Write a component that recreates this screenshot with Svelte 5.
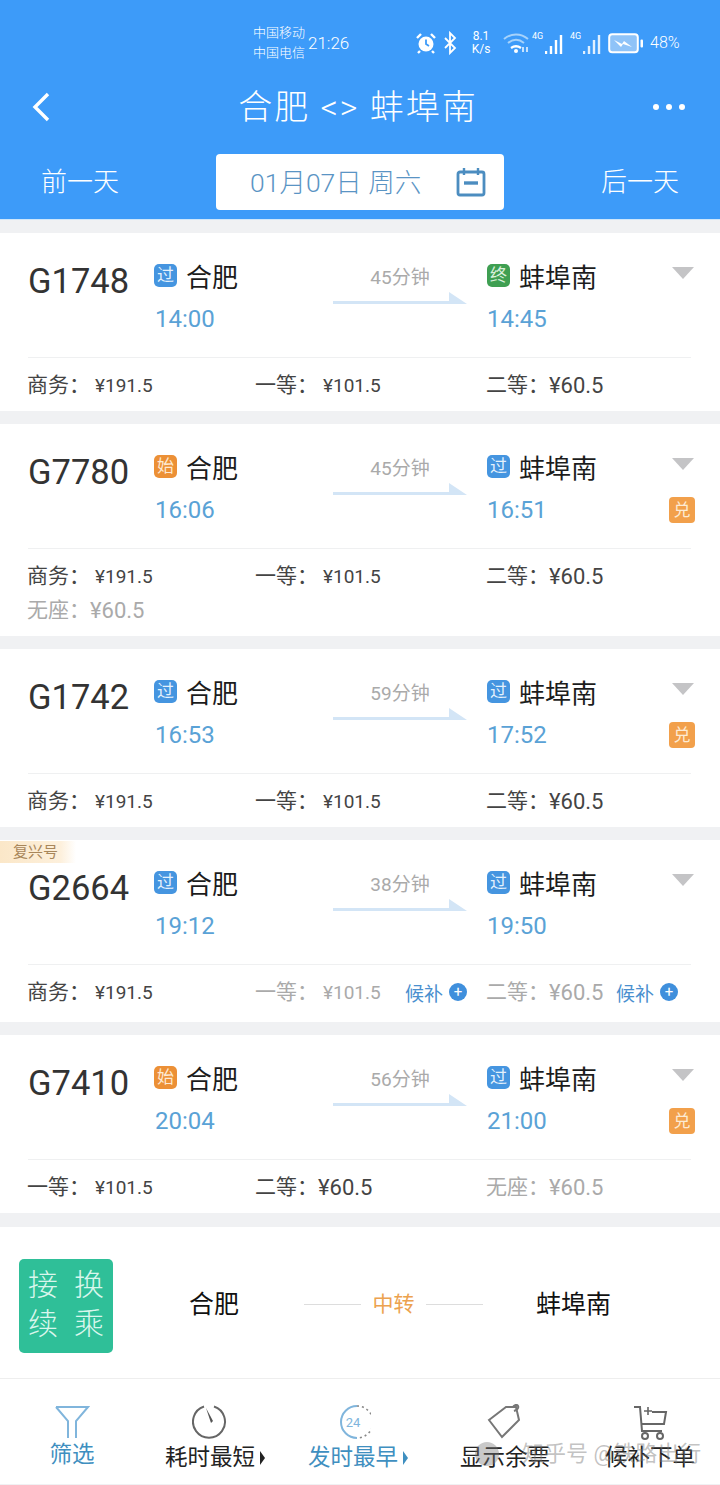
<script>
  const trains = [
    {
      no: "G1748", fromTag: "过", toTag: "终", dep: "14:00", arr: "14:45", dur: "45分钟",
      fares: [
        { name: "商务", price: "¥191.5" },
        { name: "一等", price: "¥101.5" },
        { name: "二等", price: "¥60.5", big: true },
      ],
    },
    {
      no: "G7780", fromTag: "始", toTag: "过", dep: "16:06", arr: "16:51", dur: "45分钟", swap: true,
      fares: [
        { name: "商务", price: "¥191.5" },
        { name: "一等", price: "¥101.5" },
        { name: "二等", price: "¥60.5", big: true },
        { name: "无座", price: "¥60.5", big: true, off: true },
      ],
    },
    {
      no: "G1742", fromTag: "过", toTag: "过", dep: "16:53", arr: "17:52", dur: "59分钟", swap: true,
      fares: [
        { name: "商务", price: "¥191.5" },
        { name: "一等", price: "¥101.5" },
        { name: "二等", price: "¥60.5", big: true },
      ],
    },
    {
      no: "G2664", fromTag: "过", toTag: "过", dep: "19:12", arr: "19:50", dur: "38分钟", fuxing: true,
      fares: [
        { name: "商务", price: "¥191.5" },
        { name: "一等", price: "¥101.5", off: true, wait: true },
        { name: "二等", price: "¥60.5", big: true, off: true, wait: true },
      ],
    },
    {
      no: "G7410", fromTag: "始", toTag: "过", dep: "20:04", arr: "21:00", dur: "56分钟", swap: true,
      fares: [
        { name: "一等", price: "¥101.5" },
        { name: "二等", price: "¥60.5", big: true },
        { name: "无座", price: "¥60.5", big: true, off: true },
      ],
    },
  ]

  const tagClass = { 过: "pass", 始: "start", 终: "end" }
</script>

<div class="page">
  <header>
    <div class="status">
      <div class="carriers">
        <span>中国移动</span>
        <span>中国电信</span>
      </div>
      <span class="clock">21:26</span>
      <svg class="alarm" width="22" height="22" viewBox="0 0 22 22">
        <circle cx="11" cy="12" r="7.5" fill="#fff" />
        <path d="M11 7.5V12l3 2" fill="none" stroke="#3d9bf9" stroke-width="1.8" />
        <path d="M2 6l4-4M20 6l-4-4M5 19l-2 2M17 19l2 2" stroke="#fff" stroke-width="2.4" />
      </svg>
      <svg class="bt" width="14" height="24" viewBox="0 0 14 24">
        <path d="M2 7l10 10-5 5V2l5 5L2 17" fill="none" stroke="#fff" stroke-width="1.8" />
      </svg>
      <div class="speed">
        <span>8.1</span>
        <span>K/s</span>
      </div>
      <svg class="wifi" width="26" height="22" viewBox="0 0 26 22">
        <path d="M1 7c7-6 17-6 24 0" fill="none" stroke="#a6d2fb" stroke-width="2" />
        <path d="M5 11c5-4 11-4 16 0" fill="none" stroke="#a6d2fb" stroke-width="2" />
        <path d="M8 16c3-2 7-2 10 0" fill="none" stroke="#fff" stroke-width="2.4" />
        <circle cx="13" cy="19" r="2" fill="#fff" />
        <path d="M20 15v5M24 15v5" stroke="#fff" stroke-width="1.4" />
      </svg>
      {#each [0, 1] as sim}
        <div class="signal">
          <span class="g">4G</span>
          <svg width="18" height="20" viewBox="0 0 18 20">
            <path d="M1 20v-3M6 20v-8M11 20V6M16 20V1" stroke="#fff" stroke-width="2.4" stroke-opacity={sim ? 0.85 : 1} />
          </svg>
        </div>
      {/each}
      <svg class="battery" width="36" height="22" viewBox="0 0 36 22">
        <rect x="1.2" y="2.2" width="28.6" height="18" rx="3" fill="#8fc3f8" stroke="#fff" stroke-width="2" />
        <path d="M6 8l8 4 2-3 8 6-9-3-2 3z" fill="#fff" />
        <rect x="32.5" y="7.5" width="2.5" height="8" rx="1" fill="#fff" />
      </svg>
      <span class="percent">48%</span>
    </div>

    <div class="titlebar">
      <svg class="back" width="20" height="30" viewBox="0 0 20 30">
        <path d="M17 2L4 15l13 13" fill="none" stroke="#fff" stroke-width="3.4" />
      </svg>
      <h1>合肥 &lt;&gt; 蚌埠南</h1>
      <div class="dots"><i></i><i></i><i></i></div>
    </div>

    <div class="dates">
      <span class="day">前一天</span>
      <div class="picker">
        <span>01月07日 周六</span>
        <svg width="30" height="30" viewBox="0 0 30 30">
          <rect x="2" y="5" width="26" height="23" rx="2" fill="none" stroke="#4c8dc0" stroke-width="2.8" />
          <path d="M8 1v7M22 1v7" stroke="#4c8dc0" stroke-width="2.4" />
          <path d="M8 16h14" stroke="#4c8dc0" stroke-width="3.4" />
        </svg>
      </div>
      <span class="day">后一天</span>
    </div>
  </header>

  <main>
    {#each trains as t}
      <section class="card" class:fuxing={t.fuxing}>
        {#if t.fuxing}
          <span class="ribbon">复兴号</span>
        {/if}
        <div class="route">
          <div class="no">{t.no}</div>
          <div class="stop">
            <span class="tag {tagClass[t.fromTag]}">{t.fromTag}</span>
            <span class="name">合肥</span>
          </div>
          <div class="dur">
            <span>{t.dur}</span>
            <svg width="134" height="14" viewBox="0 0 134 14">
              <path d="M0 10h116V1l18 12H0z" fill="#d3e5f6" />
            </svg>
          </div>
          <div class="stop arr">
            <span class="tag {tagClass[t.toTag]}">{t.toTag}</span>
            <span class="name">蚌埠南</span>
          </div>
          <div class="caret"></div>
          <div class="time">{t.dep}</div>
          <div class="time arr">{t.arr}</div>
          {#if t.swap}
            <div class="swap">兑</div>
          {/if}
        </div>
        <div class="fares">
          {#each t.fares as f}
            <div class="fare" class:off={f.off}>
              <span class="label">{f.name}：</span>
              <span class="price" class:big={f.big}>{f.price}</span>
              {#if f.wait}
                <span class="wait">候补<i>+</i></span>
              {/if}
            </div>
          {/each}
        </div>
      </section>
    {/each}

    <section class="transfer">
      <div class="badge">
        <span>接</span><span>换</span>
        <span>续</span><span>乘</span>
      </div>
      <span class="city from">合肥</span>
      <div class="via">
        <i></i>
        <span>中转</span>
        <i></i>
      </div>
      <span class="city to">蚌埠南</span>
    </section>
  </main>

  <footer>
    <div class="tab active first">
      <svg width="36" height="36" viewBox="0 0 36 36">
        <path d="M2 3h32L22 17v17M2 3l12 14v17" fill="none" stroke="#80b5dc" stroke-width="2" />
      </svg>
      <span>筛选</span>
    </div>
    <div class="tab">
      <svg width="36" height="36" viewBox="0 0 36 36">
        <path d="M12 2.5a16 16 0 1 0 10 0" fill="none" stroke="#666" stroke-width="2" />
        <path d="M14 4l5 15 2-2z" fill="#555" />
      </svg>
      <span class="sorted">耗时最短<b class="sort"></b></span>
    </div>
    <div class="tab active">
      <svg width="36" height="36" viewBox="0 0 36 36">
        <path d="M22 2a16 16 0 1 0 0 32" fill="none" stroke="#80b5dc" stroke-width="2" />
        <path d="M22 2a16 16 0 0 1 0 32" fill="none" stroke="#888" stroke-width="1.6" stroke-dasharray="2 3" />
        <text x="18" y="23" text-anchor="middle" class="hours">24</text>
      </svg>
      <span class="sorted">发时最早<b class="sort"></b></span>
    </div>
    <div class="tab">
      <svg width="36" height="36" viewBox="0 0 36 36">
        <path d="M2 17L19 4h10l3 13-17 17z" transform="translate(0 -1)" fill="none" stroke="#777" stroke-width="2" />
        <path d="M27 7c3-1 5-3 4-5s-4-1-5 1" fill="none" stroke="#777" stroke-width="2" />
      </svg>
      <span>显示余票</span>
    </div>
    <div class="tab">
      <svg width="36" height="36" viewBox="0 0 36 36">
        <path d="M2 3h6l2 24h20M20 8h14l-2 12H10" fill="none" stroke="#666" stroke-width="2" />
        <path d="M16 3v8M12 7h8" stroke="#666" stroke-width="1.6" />
        <circle cx="13" cy="32" r="3" fill="none" stroke="#666" stroke-width="2" />
        <circle cx="28" cy="32" r="3" fill="none" stroke="#666" stroke-width="2" />
      </svg>
      <span>候补下单</span>
    </div>
    <div class="mark">
      <i></i>
      <span>知乎号 @铁路出行</span>
    </div>
  </footer>
</div>

<style>
  :global(body) {
    margin: 0;
    background: #f0f1f3;
  }

  .page {
    width: 720px;
    height: 1485px;
    overflow: hidden;
    font-family: Roboto, "Noto Sans CJK SC", sans-serif;
    color: #222;
  }

  header {
    height: 219px;
    background: #3d9bf9;
    color: #fff;
    border-bottom: 1px solid #cfe7fb;
  }

  .status {
    box-sizing: border-box;
    padding: 21px 0 0 253px;
    display: flex;
    align-items: center;
    height: 64px;
  }

  .carriers {
    display: flex;
    flex-direction: column;
    font-size: 13px;
    line-height: 20px;
    width: 55px;
    font-weight: 300;
  }

  .clock {
    font-size: 17px;
    width: 107px;
    font-weight: 300;
  }

  .bt {
    margin-left: 6px;
  }

  .speed {
    display: flex;
    flex-direction: column;
    font-size: 12px;
    line-height: 13px;
    margin-left: 12px;
    width: 24px;
    text-align: center;
  }

  .wifi {
    margin-left: 10px;
  }

  .signal {
    display: flex;
    align-items: flex-end;
    margin-left: 3px;
    height: 22px;
    width: 35px;
  }

  .g {
    font-size: 9px;
    line-height: 9px;
    align-self: flex-start;
    width: 13px;
  }

  .signal + .signal {
    margin-left: 3px;
  }

  .battery {
    margin-left: 3px;
  }

  .percent {
    font-size: 16px;
    margin-left: 6px;
    font-weight: 300;
  }

  .titlebar {
    height: 86px;
    display: grid;
    grid-template-columns: 1fr auto 1fr;
    align-items: center;
    padding: 0 35px 0 31px;
  }

  .back {
    display: block;
  }

  h1 {
    margin: 0;
    font-size: 34px;
    font-weight: 300;
    line-height: 40px;
    letter-spacing: 2px;
  }

  .dots {
    display: flex;
    gap: 7px;
    justify-content: flex-end;
  }

  .dots i {
    width: 6px;
    height: 6px;
    border-radius: 50%;
    background: #fff;
  }

  .dates {
    display: flex;
    align-items: center;
    justify-content: space-between;
    padding: 4px 41px 0;
  }

  .day {
    font-size: 26px;
    font-weight: 300;
    line-height: 56px;
  }

  .picker {
    width: 288px;
    height: 56px;
    box-sizing: border-box;
    padding: 0 18px 0 34px;
    background: #fff;
    border-radius: 4px;
    display: flex;
    align-items: center;
    justify-content: space-between;
    color: #5a94c4;
    font-size: 26.5px;
    font-weight: 300;
  }

  .picker span {
    margin-bottom: 4px;
  }

  main {
    padding-top: 13px;
    display: flex;
    flex-direction: column;
    gap: 13px;
  }

  .card {
    position: relative;
    background: #fff;
    padding: 24px 28px 0;
  }

  .card.fuxing {
    padding-bottom: 4px;
  }

  .ribbon {
    position: absolute;
    left: 0;
    top: 1px;
    width: 76px;
    height: 22px;
    box-sizing: border-box;
    padding-left: 13px;
    background: linear-gradient(90deg, #fbe7c8, #fdf0dc 80%, #fff);
    color: #a8865a;
    font-size: 15px;
    line-height: 22px;
  }

  .route {
    display: grid;
    grid-template-columns: 126px 179px 134px 20px 185px 21px;
    grid-template-rows: 40px 44px;
    padding-bottom: 16px;
    border-bottom: 1px solid #eff0f1;
    margin-right: 1px;
    position: relative;
  }

  .no {
    grid-row: 1 / 3;
    font-size: 34.5px;
    line-height: 40px;
    padding-top: 4px;
    color: #333;
  }

  .stop {
    display: flex;
    align-items: center;
    gap: 9px;
    font-size: 26px;
    color: #1c1c1c;
  }

  .stop .name {
    margin-bottom: 4px;
  }

  .stop.arr {
    grid-column: 5;
    grid-row: 1;
  }

  .tag {
    width: 23px;
    height: 23px;
    border-radius: 5px;
    color: #e4f1fc;
    font-size: 17px;
    line-height: 23px;
    text-align: center;
    flex: none;
    margin-top: -3px;
  }

  .tag.pass {
    background: #4595e0;
  }

  .tag.start {
    background: #ec9036;
    color: #fde9d2;
  }

  .tag.end {
    background: #3f9f52;
    color: #d8f0dc;
  }

  .dur {
    grid-column: 3;
    grid-row: 1 / 3;
    display: flex;
    flex-direction: column;
    align-items: center;
    font-size: 19px;
    line-height: 40px;
    color: #aaa;
  }

  .dur span {
    margin-top: 1px;
  }

  .dur svg {
    margin-top: -7px;
    display: block;
  }

  .caret {
    grid-column: 6;
    grid-row: 1;
    margin-top: 10px;
    width: 0;
    height: 0;
    border-left: 11px solid transparent;
    border-right: 11px solid transparent;
    border-top: 12px solid #c4c4c6;
  }

  .time {
    grid-column: 2;
    grid-row: 2;
    font-size: 24px;
    line-height: 44px;
    color: #5aa2d6;
    padding-left: 1px;
  }

  .time.arr {
    grid-column: 5;
    padding-left: 0;
  }

  .swap {
    grid-column: 6;
    grid-row: 2;
    align-self: center;
    width: 26px;
    height: 26px;
    margin-left: -3px;
    border-radius: 4px;
    background: #f2a04b;
    color: #fdebd3;
    font-size: 17px;
    line-height: 26px;
    text-align: center;
  }

  .fares {
    display: grid;
    grid-template-columns: 228px 231px 1fr;
    padding: 10px 0 9px;
  }

  .fare {
    display: flex;
    align-items: center;
    height: 34px;
    font-size: 21px;
    color: #444;
    white-space: nowrap;
  }

  .label {
    width: 67px;
    flex: none;
    margin-left: -1px;
    margin-bottom: 4px;
  }

  .price {
    font-size: 19px;
    margin-left: 1px;
  }

  .price.big {
    font-size: 22px;
    margin-left: -4px;
  }

  .fare.off {
    color: #aaa;
  }

  .wait {
    margin-left: auto;
    margin-right: 20px;
    display: flex;
    align-items: center;
    gap: 6px;
    font-size: 19px;
    color: #4a90cf;
  }

  .fare:nth-child(3) .wait {
    margin-right: 14px;
  }

  .wait i {
    width: 18px;
    height: 18px;
    border-radius: 50%;
    background: #3f8fdc;
    color: #fff;
    font-size: 15px;
    line-height: 18px;
    font-style: normal;
    text-align: center;
  }

  .transfer {
    height: 152px;
    box-sizing: border-box;
    margin-top: 1px;
    padding: 6px 0 0 19px;
    background: #fff;
    display: flex;
    align-items: center;
    border-bottom: 1px solid #eee;
  }

  .badge {
    width: 94px;
    height: 94px;
    display: grid;
    grid-template-columns: 46px 46px;
    grid-template-rows: 39px 39px;
    place-items: center;
    justify-content: center;
    align-content: center;
    border-radius: 5px;
    background: #2fbf98;
    color: #d9f6ec;
    font-size: 30px;
    line-height: 36px;
    font-weight: 300;
  }

  .badge span {
    margin-bottom: 3px;
  }

  .city {
    font-size: 25px;
    color: #111;
    line-height: 36px;
    margin-bottom: 2px;
  }

  .city.from {
    margin-left: 76px;
  }

  .via {
    margin-left: 65px;
    width: 179px;
    display: flex;
    align-items: center;
    justify-content: space-between;
    color: #eca24f;
    font-size: 21px;
    margin-bottom: 2px;
  }

  .via span {
    margin-bottom: 5px;
  }

  .via i {
    width: 57px;
    height: 1px;
    background: #ddd;
  }

  .city.to {
    margin-left: 53px;
  }

  footer {
    position: relative;
    height: 105px;
    background: #fff;
    display: grid;
    grid-template-columns: 144px 132px 154px 150px 140px;
  }

  .tab {
    display: flex;
    flex-direction: column;
    align-items: center;
    padding-top: 25px;
    font-size: 22.5px;
    line-height: 30px;
    color: #222;
    white-space: nowrap;
  }

  .tab svg {
    display: block;
    margin-bottom: 2px;
  }

  .tab.active {
    color: #3f8fc0;
  }

  .tab.first span {
    margin-top: -3px;
  }

  .sorted {
    position: relative;
  }

  .sort {
    position: absolute;
    right: -10px;
    top: 9px;
    width: 0;
    height: 0;
    border-top: 7px solid transparent;
    border-bottom: 7px solid transparent;
    border-left: 5px solid currentColor;
  }

  .hours {
    font-size: 13px;
    fill: #80b5dc;
  }

  .mark {
    position: absolute;
    left: 475px;
    top: 60px;
    display: flex;
    align-items: center;
    gap: 23px;
    font-size: 22px;
    line-height: 30px;
    color: rgba(120, 120, 120, 0.45);
    white-space: nowrap;
  }

  .mark i {
    width: 24px;
    height: 24px;
    border-radius: 50%;
    background: rgba(120, 120, 120, 0.4);
  }
</style>
